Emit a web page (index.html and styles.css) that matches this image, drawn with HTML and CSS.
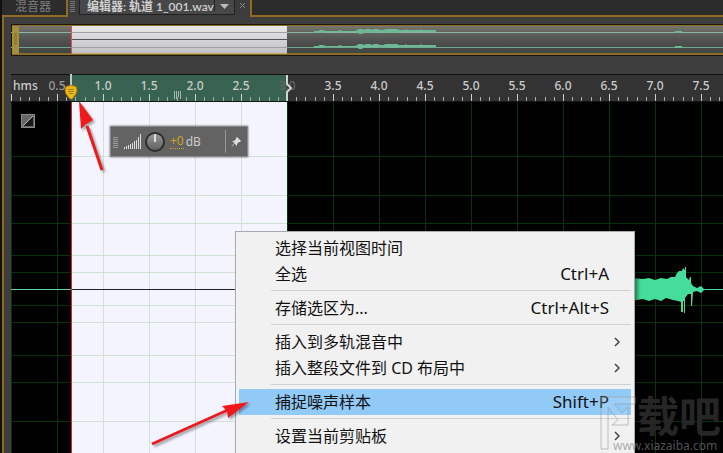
FILE: index.html
```html
<!DOCTYPE html>
<html lang="zh-CN">
<head>
<meta charset="utf-8">
<title>编辑器: 轨道 1_001.wav</title>
<link rel="stylesheet" href="styles.css">
</head>
<body>
<main class="app">
  <header class="tabs">
    <button class="tab tab-mixer">混音器</button>
    <div class="tab-active">
      <span class="grip"></span>
      <button class="tab tab-editor"><span>编辑器: 轨道 1_001.wav</span><svg class="caret" viewBox="0 0 20 12"><path d="M0.5 0V11" stroke="#222"/><path d="M6 4h9l-4.500 5z" fill="#bbb"/></svg></button>
      <button class="tab-close" aria-label="关闭"><svg width="7" height="7" viewBox="0 0 7 7"><path d="M1 1l5 5M6 1L1 6" stroke="#8a8a8a"/></svg></button>
    </div>
    <div class="tab-fill"></div>
  </header>

  <section class="panel">
    <div class="overview">
      <svg width="100%" height="32">
        <defs><linearGradient id="sel" x2="0" y2="1"><stop offset="0" stop-color="#e9e9e9"/><stop offset="1" stop-color="#c0c0c6"/></linearGradient>
        <linearGradient id="ov" x2="0" y2="1"><stop offset="0" stop-color="#77746b"/><stop offset=".3" stop-color="#5d605d"/><stop offset=".55" stop-color="#505050"/><stop offset="1" stop-color="#404641"/></linearGradient></defs>
        <rect width="100%" height="32" fill="#1e170c"/>
        <rect x="1" y="1" width="100%" height="30" fill="#8c6c2b"/>
        <rect x="1" y="2" width="100%" height="27" fill="url(#ov)"/>
        <rect y="8" width="100%" height="1" fill="#8cb5a2"/><rect y="23" width="100%" height="1" fill="#71a790"/>
        <g fill="#6fb795"><path id="spk" d="M303 7h4l2-1h3l3 1h12l2-1 3 1h12l2-1 2-1h3l2 1 2-1h4l2 1 2-1h4l2 1h3l3-1h11l2 1h6l1-1 1 1h13l1-1 1 1h14v2h-14l-1 1-1-1h-13l-1 1-1-1h-6l-2 1h-11l-3-1h-3l-2 1h-4l-2-1-2 1h-4l-2-1-2 2h-3l-2-2h-14l-3 1-2-1h-12l-3 1h-9z"/><use href="#spk" y="15"/><path d="M664 7h7v2h-7zM664 22h7v2h-7z"/></g>
        <rect x="60" y="2" width="216" height="28" fill="url(#sel)"/>
        <path d="M60 8.500H276M60 23.500H276" stroke="#9aa3a1"/><path d="M60 15.500H276" stroke="#555"/><path d="M60 29.500H276" stroke="#bda866"/>
        <path d="M60.500 2v28" stroke="#e0505a"/>
        <rect x="1" y="2" width="7" height="28" fill="#a48f3c"/><path d="M3 10h3M3 12h3M3 14h3M3 16h3M3 18h3M3 20h3" stroke="#7d6b2b"/>
      </svg>
    </div>

    <div class="timeline">
      <div class="ruler">
        <svg class="ticks" width="100%" height="27">
          <defs><pattern id="tk" width="46" height="27" patternUnits="userSpaceOnUse"><path d="M.5 19v7" stroke="#d0d0d0"/><path d="M9.500 22v4M18.500 22v4M28.500 22v4M37.500 22v4" stroke="#aaa"/></pattern></defs>
          <rect x="60" width="216" height="27" fill="#386350"/>
          <rect width="100%" height="27" fill="url(#tk)"/>
          <path d="M163.500 16v8M165.500 16v8M167.500 16v6M169.500 16v8" stroke="#a5b6ad"/>
          <rect y="26" width="100%" height="1" fill="#101510"/>
        </svg>
        <div class="labels"><span class="unit">hms</span><span class="dim">0.5</span><span>1.0</span><span>1.5</span><span>2.0</span><span>2.5</span><span class="faint">3.0</span><span>3.5</span><span>4.0</span><span>4.5</span><span>5.0</span><span>5.5</span><span>6.0</span><span>6.5</span><span>7.0</span><span>7.5</span></div>
      </div>
      <div class="wave">
        <svg class="wave-art" width="100%" height="100%">
          <defs>
            <pattern id="gv" width="46" height="400" patternUnits="userSpaceOnUse"><path d="M.5 0v400" stroke="#06350c"/></pattern>
            <pattern id="gs" width="46" height="400" patternUnits="userSpaceOnUse"><path d="M.5 0v400" stroke="#cfe2d3"/></pattern>
          </defs>
          <rect width="100%" height="100%" fill="#000"/>
          <rect width="100%" height="100%" fill="url(#gv)"/>
          <g fill="#06350c"><rect y="54" width="100%" height="1"/><rect y="93" width="100%" height="1"/><rect y="121" width="100%" height="1"/><rect y="153" width="100%" height="1"/><rect y="170" width="100%" height="1"/><rect y="203" width="100%" height="1"/><rect y="220" width="100%" height="1"/><rect y="253" width="100%" height="1"/><rect y="280" width="100%" height="1"/><rect y="319" width="100%" height="1"/></g>
          <rect y="187" width="100%" height="1" fill="#62d5a0"/>
          <rect x="60" width="216" height="100%" fill="#f4f4ff"/>
          <rect x="60" width="216" height="100%" fill="url(#gs)"/>
          <path d="M60 54.500h216M60 93.500h216M60 121.500h216M60 153.500h216M60 170.500h216M60 203.500h216M60 220.500h216M60 253.500h216M60 280.500h216M60 319.500h216" stroke="#cfe2d3"/>
          <path d="M60 187.500h216" stroke="#222"/>
          <rect x="60" width="1" height="100%" fill="#d8202c"/>
          <path d="M620 176L632 177L638 176L644 178L650 176L656 177L660 175L664 175L666 171L668 169L671 169L672 166L674 168V165H675V175L678 178L679 175H680V181L682 184L686 186L690 184L693 187H710V188H693L690 191L686 189L682 190L681 204H680V192L677 192L674 196V211H673V199H672V210H670V200L667 199L662 198L655 196L650 199L644 197L638 199L632 197L620 199z" fill="#45dd9b"/>
        </svg>
        <svg class="channel-icon" viewBox="0 0 14 14"><rect x=".5" y=".5" width="13" height="13" fill="#666" stroke="#888"/><path d="M2 12L12 2V12z" fill="#171717"/><path d="M2 12L12 2" stroke="#bbb"/></svg>
      </div>
      <svg class="range-end" viewBox="0 0 8 27"><path d="M1 0v9l4 4-4 4v9" fill="none" stroke="#cfd5d0" stroke-width="2"/></svg>
      <svg class="playhead" viewBox="0 0 14 27"><path d="M7 0v14" stroke="#bccbc3" stroke-width="2"/><path d="M2 12.500Q7 10.500 12 12.500Q14 16 12 20L8 25H6L2 20Q0 16 2 12.500z" fill="#ecba1c" stroke="#a9790b"/><path d="M4 15.500h6M4 17.500h6M5 19.500h4" stroke="#a57c12"/></svg>
    </div>
  </section>

  <aside class="hud">
    <span class="hud-grip"></span>
    <svg class="bars" viewBox="0 0 18 15"><path d="M.5 15v-2M2.500 15v-3M4.500 15v-4M6.500 15v-5M8.500 15v-6M10.500 15v-8M12.500 15v-9M14.500 15V3M16.500 15V0" stroke="#ddd"/></svg>
    <svg class="knob" viewBox="0 0 22 22"><defs><linearGradient id="kn" x2="0" y2="1"><stop stop-color="#999"/><stop offset="1" stop-color="#606060"/></linearGradient></defs><circle cx="11" cy="11" r="10" fill="#2c2c2c"/><circle cx="11" cy="11" r="8" fill="url(#kn)"/><path d="M11 3v8" stroke="#ddd" stroke-width="2"/></svg>
    <span class="gain">+0</span><span class="db">dB</span>
    <button class="pin" aria-label="固定"><svg viewBox="0 0 11 11"><path d="M6 1l4 4-1 1-1 0-2 2v2L3.500 7.500 1 10.500l-.5-.5L3.500 7 1 5h2l2-2V2z" fill="#ddd"/></svg></button>
  </aside>

  <nav class="menu" aria-label="编辑">
    <button class="item"><span>选择当前视图时间</span></button>
    <button class="item"><span>全选</span><kbd>Ctrl+A</kbd></button>
    <hr>
    <button class="item"><span>存储选区为...</span><kbd>Ctrl+Alt+S</kbd></button>
    <hr>
    <button class="item"><span>插入到多轨混音中</span><svg class="chev" viewBox="0 0 6 10"><path d="M1 1l4 4-4 4"/></svg></button>
    <button class="item"><span>插入整段文件到 CD 布局中</span><svg class="chev" viewBox="0 0 6 10"><path d="M1 1l4 4-4 4"/></svg></button>
    <hr>
    <button class="item current"><span>捕捉噪声样本</span><kbd>Shift+P</kbd></button>
    <hr>
    <button class="item"><span>设置当前剪贴板</span><svg class="chev" viewBox="0 0 6 10"><path d="M1 1l4 4-4 4"/></svg></button>
  </nav>

  <svg class="arrow arrow-a" viewBox="0 0 34 74"><path d="M13 27L28 71" stroke="#f01818" stroke-width="3"/><path d="M5 2L19 21l-5 3-2 1-5 5z" fill="#f01818"/></svg>
  <svg class="arrow arrow-b" viewBox="0 0 100 50"><path d="M2 44L80 9" stroke="#e81c20" stroke-width="3"/><path d="M99 2L78 18l-1-7-5-5z" fill="#f01818"/></svg>

  <div class="watermark">
    <svg class="mark" viewBox="0 0 38 62"><path d="M3 3h34v7H16l8 9 6-6v18H14l6-5-10-13v42H3z"/></svg>
    <b class="mark-text">载吧</b>
    <span class="site">www.xiazaiba.com</span>
  </div>
</main>
</body>
</html>
```
FILE: styles.css
```css
* { box-sizing: border-box; }
body { margin: 0; background: #3c3c3c; font-family: "Noto Sans", "Noto Sans CJK SC", sans-serif; }
button { border: 0; padding: 0; background: none; color: inherit; font: inherit; }
svg { display: block; }
.app { position: relative; min-height: 100vh; overflow: hidden; display: flex; flex-direction: column; border-left: 2px solid #111; }
.tabs { display: flex; height: 17px; background: #2c2c2c; color: #bdbdbd; font-family: Lato, "Noto Sans CJK SC", sans-serif; font-size: 12px; line-height: 13px; }
.tab { display: flex; white-space: nowrap; }
.tab-mixer { width: 66px; padding-left: 13px; color: #7f7f7f; border-bottom: 2px solid #8f6c22; border-right: 2px solid #8f6c22; }
.tab-active { display: flex; width: 184px; background: #3c3c3c; border-right: 2px solid #8f6c22; }
.grip { width: 5px; height: 12px; margin: 0 4px 0 2px; background: repeating-linear-gradient(#3c3c3c 0 1px, #777 1px 2px); }
.tab-editor { flex: 1; height: 15px; padding-left: 7px; justify-content: space-between; border: 1px solid #222; border-top: 0; background: #484848; color: #d0d0d0; font-weight: 600; }
.caret { width: 20px; height: 12px; }
.tab-close { width: 15px; display: flex; justify-content: center; padding-top: 2px; }
.tab-fill { flex: 1; border-bottom: 2px solid #8f6c22; }
.panel { flex: 1; display: flex; flex-direction: column; gap: 18px; padding: 7px 0 0 7px; border-left: 2px solid #8f6c22; background: #3e3e3e; }
.overview { height: 32px; }
.timeline { position: relative; flex: 1; display: flex; flex-direction: column; }
.ruler { position: relative; height: 28px; border-top: 1px solid #111; background: #333; }
.ticks { position: absolute; inset: 0; }
.labels { position: relative; display: flex; overflow: hidden; padding-top: 3px; color: #ccc; font-size: 12px; font-weight: 500; line-height: 16px; }
.labels span { flex: 0 0 46px; min-width: 0; text-align: center; }
.labels .unit { flex-basis: 23px; padding-left: 2px; text-align: left; }
.labels .dim { color: #999; }
.labels .faint { color: #666; }
.wave { position: relative; flex: 1; }
.wave-art { position: absolute; inset: 0; }
.channel-icon { position: absolute; left: 10px; top: 12px; width: 14px; height: 14px; }
.range-end { position: absolute; left: 275px; top: 1px; width: 8px; height: 27px; }
.playhead { position: absolute; left: 53px; top: 0; width: 14px; height: 27px; }
.hud { position: absolute; left: 108px; top: 126px; width: 138px; height: 31px; display: flex; align-items: center; background: #636363; border: 1px solid #888; box-shadow: 0 0 2px #555; color: #ccc; font-size: 12px; line-height: 14px; }
.hud-grip { width: 5px; height: 12px; margin: 0 6px 0 2px; background: repeating-linear-gradient(#666 0 1px, #999 1px 2px); }
.bars { width: 18px; height: 15px; }
.knob { width: 22px; height: 22px; margin: 0 4px 0 2px; }
.gain { color: #d3a21f; border-bottom: 1px dotted #d3a21f; }
.db { margin-left: 2px; }
.pin { margin-left: auto; height: 23px; padding: 0 5px; border-left: 1px solid #999; }
.pin svg { width: 11px; height: 11px; }
.menu { position: absolute; left: 233px; top: 231px; bottom: 0; width: 400px; padding: 3px; border: 1px solid #aaa; border-bottom: 0; background: #f1f1f1; box-shadow: 3px 3px 3px rgba(0, 0, 0, .4); color: #111; font-size: 16px; line-height: 26px; }
.item { display: flex; align-items: center; justify-content: space-between; width: 100%; height: 26px; padding: 0 22px 0 36px; white-space: nowrap; }
.item:has(.chev) { padding-right: 11px; }
.item.current { background: #91c9f7; }
.menu kbd { font-family: inherit; font-size: 17px; }
.menu hr { height: 1px; margin: 3px 0 4px 32px; border: 0; background: #d0d0d0; }
.chev { width: 6px; height: 10px; fill: none; stroke: #444; stroke-width: 1.5; }
.arrow { position: absolute; filter: drop-shadow(2px 2px 1px rgba(0, 0, 0, .35)); }
.arrow-a { left: 72px; top: 99px; width: 34px; height: 74px; }
.arrow-b { left: 148px; top: 400px; width: 100px; height: 50px; }
.watermark { position: absolute; left: 596px; top: 394px; width: 125px; height: 59px; pointer-events: none; }
.mark { width: 38px; height: 62px; fill: rgba(255, 255, 255, .1); stroke: #999; stroke-opacity: .6; }
.mark-text { position: absolute; left: 39px; top: 2px; color: #262626; font-size: 42px; line-height: 40px; white-space: nowrap; }
.site { position: absolute; left: 15px; top: 46px; color: rgba(130, 130, 130, .65); font-size: 12px; line-height: 12px; }
```
